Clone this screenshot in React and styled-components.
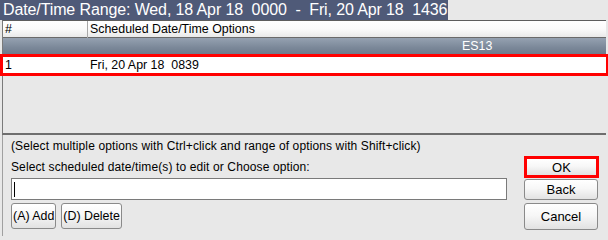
import React from 'react'
import styled, { createGlobalStyle } from 'styled-components'

const GlobalStyle = createGlobalStyle`
  html, body {
    margin: 0;
    padding: 0;
    background: #e8e8e8;
  }
  body {
    font-family: "Liberation Sans", Arial, sans-serif;
    color: #000;
  }
`;

const Window = styled.div`
  width: 608px;
  height: 236px;
  display: flex;
  flex-direction: column;
  background: #e8e8e8;
  overflow: hidden;
`;

const TitleBar = styled.div`
  height: 20px;
  display: flex;
  align-items: stretch;
`;

const TitleText = styled.span`
  background: #4f5a78;
  color: #fff;
  font-size: 16px;
  letter-spacing: -0.12px;
  line-height: 20px;
  padding: 0 1px 0 3px;
  white-space: pre;
`;

const TableFrame = styled.div`
  height: 112px;
  margin: 0 2px;
  border-top: 1px solid #5e5e5e;
  border-left: 1px solid #7a7a7a;
  border-bottom: 2px solid #6e6e6e;
  display: flex;
  flex-direction: column;
`;

const HeaderRow = styled.div`
  display: grid;
  grid-template-columns: 85px 1fr;
  height: 16px;
  border-bottom: 1px solid #6a6a6a;
  background: linear-gradient(#ffffff 0%, #fbfbfb 50%, #e9e9e9 100%);
`;

const HeaderCell = styled.div`
  font-size: 12.4px;
  line-height: 17px;
  padding-left: 2px;
  border-right: ${p => (p.$divider ? '1px solid #a8a8a8' : 'none')};
  white-space: pre;
`;

const GroupRow = styled.div`
  height: 16px;
  background: linear-gradient(#95a1b1 0%, #7b8899 60%, #6d7a8c 100%);
  color: #fff;
  font-size: 12.4px;
  line-height: 16px;
  padding-left: 459px;
`;

const DataRow = styled.div`
  display: grid;
  grid-template-columns: 85px 1fr;
  height: 16px;
  margin: 3px 0 0 0;
  background: #fff;
  outline: ${p => (p.$selected ? '3px solid #ff0000' : 'none')};
  outline-offset: 0;
`;

const DataCell = styled.div`
  font-size: 12.4px;
  line-height: 16px;
  padding-left: 2px;
  white-space: pre;
`;

const BottomPanel = styled.div`
  flex: 1;
  margin-left: 2px;
  border-left: 1px solid #a0a0a0;
  display: grid;
  grid-template-columns: 496px 1fr;
  padding: 4px 0 0 8px;
`;

const LeftColumn = styled.div`
  display: flex;
  flex-direction: column;
`;

const Hint = styled.div`
  font-size: 12px;
  letter-spacing: 0.12px;
  line-height: 14px;
  margin-top: ${p => p.$gap || 0}px;
  white-space: nowrap;
`;

const TextInput = styled.div`
  height: 20px;
  margin-top: 4px;
  background: #fff;
  border: 1px solid #7a7a7a;
  display: flex;
  align-items: center;
  padding-left: 2px;
`;

const Caret = styled.span`
  width: 1px;
  height: 15px;
  background: #000;
`;

const ButtonRow = styled.div`
  display: flex;
  gap: 5px;
  margin-top: 3px;
`;

const Button = styled.button`
  font-family: "Liberation Sans", Arial, sans-serif;
  font-size: ${p => (p.$w ? 13 : 12.4)}px;
  color: #000;
  height: ${p => p.$h || 26}px;
  width: ${p => (p.$w ? `${p.$w}px` : 'auto')};
  padding: 0 ${p => (p.$w ? 0 : 1)}px;
  border: ${p => (p.$highlight ? '3px solid #ff0000' : '1px solid #8a8a8a')};
  border-radius: ${p => (p.$highlight ? 0 : 3)}px;
  background: linear-gradient(#ffffff 0%, #f7f7f7 45%, #e2e2e2 100%);
  margin-top: ${p => p.$mt || 0}px;
  box-sizing: border-box;
  cursor: pointer;
`;

const RightColumn = styled.div`
  display: flex;
  flex-direction: column;
  align-items: flex-start;
  padding: 17px 0 0 17px;
`;

export default function App() {
  return (
    <>
      <GlobalStyle />
      <Window>
        <TitleBar>
          <TitleText>{'Date/Time Range: Wed, 18 Apr 18  0000  -  Fri, 20 Apr 18  1436'}</TitleText>
        </TitleBar>
        <TableFrame>
          <HeaderRow>
            <HeaderCell $divider>#</HeaderCell>
            <HeaderCell>Scheduled Date/Time Options</HeaderCell>
          </HeaderRow>
          <GroupRow>ES13</GroupRow>
          <DataRow $selected>
            <DataCell>1</DataCell>
            <DataCell>{'Fri, 20 Apr 18  0839'}</DataCell>
          </DataRow>
        </TableFrame>
        <BottomPanel>
          <LeftColumn>
            <Hint>(Select multiple options with Ctrl+click and range of options with Shift+click)</Hint>
            <Hint $gap={7}>Select scheduled date/time(s) to edit or Choose option:</Hint>
            <TextInput><Caret /></TextInput>
            <ButtonRow>
              <Button>(A) Add</Button>
              <Button>(D) Delete</Button>
            </ButtonRow>
          </LeftColumn>
          <RightColumn>
            <Button $w={75} $h={22} $highlight>OK</Button>
            <Button $w={74} $h={21} $mt={1}>Back</Button>
            <Button $w={74} $h={27} $mt={3}>Cancel</Button>
          </RightColumn>
        </BottomPanel>
      </Window>
    </>
  )
}
